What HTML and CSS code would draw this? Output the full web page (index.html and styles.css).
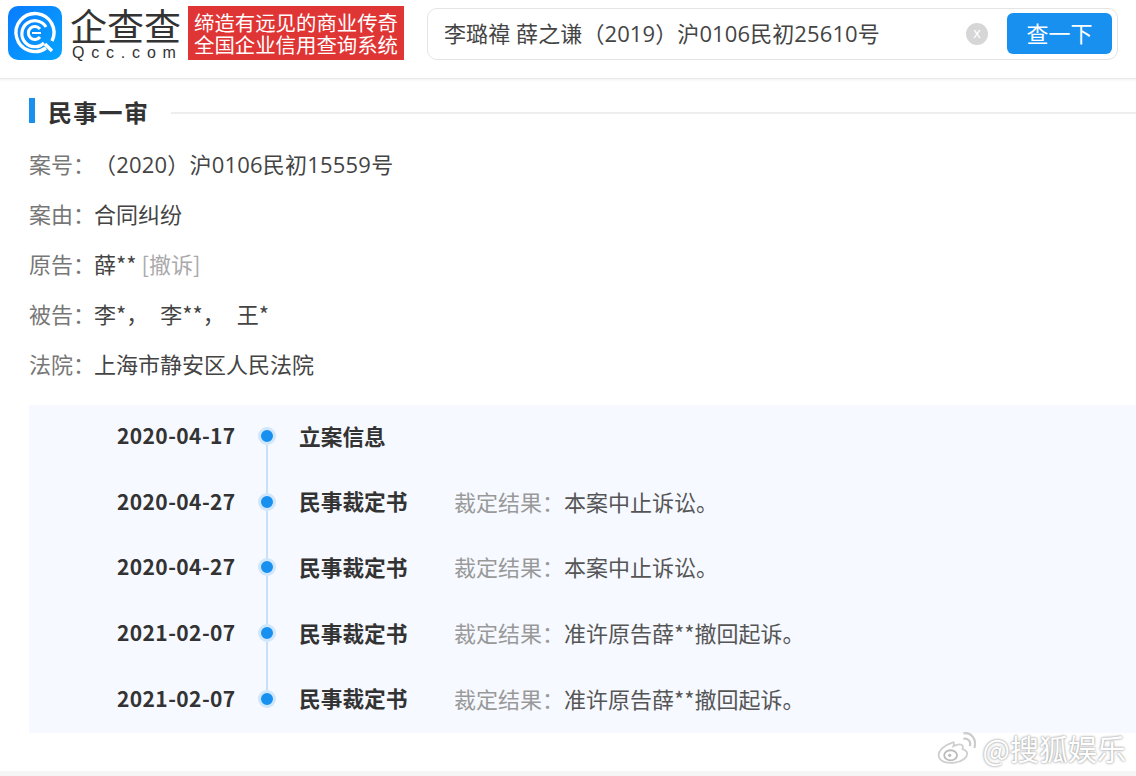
FILE: index.html
```html
<!DOCTYPE html>
<html lang="zh-CN">
<head>
<meta charset="utf-8">
<title>企查查</title>
<link rel="stylesheet" href="styles.css">
</head>
<body>
<header class="topbar">
  <div class="brand">
    <svg class="logo-icon" width="54" height="54" viewBox="0 0 54 54">
      <defs><linearGradient id="lg" x1="0" y1="0" x2="1" y2="1"><stop offset="0" stop-color="#0a7bff"/><stop offset="1" stop-color="#06a4ff"/></linearGradient></defs>
      <rect width="54" height="54" rx="10" fill="url(#lg)"/>
      <path d="M38 42 A19 19 0 1 1 44 35" fill="none" stroke="#fff" stroke-width="3.4"/>
      <path d="M36 37 A13 13 0 1 1 38 21" fill="none" stroke="#fff" stroke-width="3.2"/>
      <path d="M32 31 A6.5 6.5 0 1 1 32 23" fill="none" stroke="#fff" stroke-width="3"/>
      <path d="M24 27 H33" stroke="#fff" stroke-width="2"/>
      <path d="M37 38 L44 45" stroke="#fff" stroke-width="3.4"/>
    </svg>
    <div class="wordmark">
      <div class="wordmark-cn">企查查</div>
      <div class="wordmark-en">Qcc.com</div>
    </div>
    <div class="slogan">
      <div>缔造有远见的商业传奇</div>
      <div>全国企业信用查询系统</div>
    </div>
  </div>
  <div class="search">
    <span class="search-text">李璐禕 薛之谦（2019）沪0106民初25610号</span>
    <span class="search-clear">x</span>
    <span class="search-btn">查一下</span>
  </div>
</header>
<main class="content">
  <div class="section-head">
    <h2 class="section-title">民事一审</h2>
    <span class="section-rule"></span>
  </div>
  <dl class="facts">
    <div class="fact"><dt>案号：</dt><dd class="case-no">（2020）沪0106民初15559号</dd></div>
    <div class="fact"><dt>案由：</dt><dd>合同纠纷</dd></div>
    <div class="fact"><dt>原告：</dt><dd>薛** <span class="muted">[撤诉]</span></dd></div>
    <div class="fact"><dt>被告：</dt><dd class="people"><span>李*，</span><span>李**，</span><span>王*</span></dd></div>
    <div class="fact"><dt>法院：</dt><dd>上海市静安区人民法院</dd></div>
  </dl>
  <ol class="timeline">
    <li class="event"><time>2020-04-17</time><span class="dot"></span><strong>立案信息</strong></li>
    <li class="event"><time>2020-04-27</time><span class="dot"></span><strong>民事裁定书</strong><span class="result"><em>裁定结果：</em>本案中止诉讼。</span></li>
    <li class="event"><time>2020-04-27</time><span class="dot"></span><strong>民事裁定书</strong><span class="result"><em>裁定结果：</em>本案中止诉讼。</span></li>
    <li class="event"><time>2021-02-07</time><span class="dot"></span><strong>民事裁定书</strong><span class="result"><em>裁定结果：</em>准许原告薛**撤回起诉。</span></li>
    <li class="event"><time>2021-02-07</time><span class="dot"></span><strong>民事裁定书</strong><span class="result"><em>裁定结果：</em>准许原告薛**撤回起诉。</span></li>
  </ol>
</main>
<div class="watermark">
  <svg width="42" height="36" viewBox="0 0 46 38">
    <path d="M18 13 C8 16 2 23 3 28 C4 34 12 36 20 35 C29 34 35 29 34 24 C33 21 30 21 29 20 C30 17 29 15 26 15 C23 15 21 16 19 17 C20 14 20 12 18 13 Z" fill="#fff" stroke="#cfcfcf" stroke-width="2"/>
    <ellipse cx="16" cy="27" rx="7" ry="5.5" fill="none" stroke="#bbb" stroke-width="2"/>
    <circle cx="15" cy="27" r="1.8" fill="#bbb"/>
    <path d="M30 9 C35 8 39 12 37 17" fill="none" stroke="#ccc" stroke-width="2.4"/>
    <path d="M30 3 C38 1 45 9 42 19" fill="none" stroke="#ccc" stroke-width="2.4"/>
  </svg>
  <span>@搜狐娱乐</span>
</div>
```

FILE: styles.css
```css
* { box-sizing: border-box; }
html, body { margin: 0; padding: 0; }
body {
  width: 1136px;
  height: 776px;
  overflow: hidden;
  position: relative;
  background: #fff;
  color: #333;
  font-family: "Noto Sans CJK SC", sans-serif;
}
.topbar {
  height: 79px;
  display: flex;
  align-items: flex-start;
  justify-content: space-between;
  padding: 6px 18px 0 8px;
  border-bottom: 1px solid #e9e9e9;
  box-shadow: 0 1px 2px #f0f0f0;
}
.brand { display: flex; align-items: flex-start; }
.logo-icon { flex: none; }
.wordmark { width: 118px; margin-left: 8px; color: #333; }
.wordmark-cn {
  font-size: 37px;
  line-height: 39px;
  white-space: nowrap;
}
.wordmark-en {
  padding-left: 2px;
  font-size: 16px;
  line-height: 15px;
  letter-spacing: 6.8px;
  font-family: "Liberation Sans", sans-serif;
  white-space: nowrap;
}
.slogan {
  width: 216px;
  height: 54px;
  padding-top: 5px;
  background: #e03535;
  color: #fff;
  font-size: 20.4px;
  line-height: 22px;
  text-align: center;
  white-space: nowrap;
}
.search {
  width: 691px;
  height: 52px;
  margin-top: 2px;
  padding: 0 5px 0 16px;
  display: flex;
  align-items: center;
  border: 1px solid #e4e4e4;
  border-radius: 10px;
}
.search-text {
  flex: 1;
  font-family: "Open Sans", "Noto Sans CJK SC", sans-serif;
  font-size: 22px;
  line-height: 30px;
  letter-spacing: 0.1px;
  padding-bottom: 3px;
  color: #444;
  white-space: nowrap;
}
.search-clear {
  width: 22px;
  height: 22px;
  border-radius: 50%;
  background: #d6d6d6;
  color: #fff;
  font: 15px/20px "Liberation Sans", sans-serif;
  text-align: center;
  margin-right: 19px;
}
.search-btn {
  width: 105px;
  height: 41px;
  margin-bottom: 1px;
  border-radius: 6px;
  background: #1890f0;
  color: #fff;
  font-size: 22px;
  line-height: 39px;
  text-align: center;
}
.content { padding: 19px 0 0 29px; }
.section-head { display: flex; align-items: center; height: 25px; }
.section-title {
  margin: 0;
  padding-left: 13px;
  border-left: 6px solid #1890f0;
  height: 25px;
  font-size: 24px;
  line-height: 27px;
  font-weight: 700;
  letter-spacing: 1.3px;
  color: #333;
  white-space: nowrap;
}
.section-rule { flex: 1; height: 2px; margin: 5px 0 0 22px; background: #eee; }
.facts { margin: 15px 0 0; }
.fact {
  display: flex;
  height: 50px;
  align-items: center;
  font-size: 22px;
}
.fact dt { flex: none; width: 65px; color: #777; white-space: nowrap; }
.fact dd { margin: 0; color: #444; white-space: nowrap; }
.fact .case-no {
  font-family: "Open Sans", "Noto Sans CJK SC", sans-serif;
  letter-spacing: 0.2px;
}
.muted { color: #aaa; }
.people { display: flex; gap: 12px; }
.timeline {
  list-style: none;
  margin: 17px 0 0;
  padding: 0;
  height: 328px;
  background: #f6f9ff;
}
.event {
  position: relative;
  height: 65.6px;
  display: flex;
  align-items: center;
  padding: 0 0 5px 88px;
  font-size: 22px;
  white-space: nowrap;
}
.event time {
  width: 119px;
  font-weight: 700;
  font-size: 21px;
  letter-spacing: 0.4px;
  color: #333;
  flex: none;
}
.dot {
  position: relative;
  flex: none;
  width: 18px;
  height: 18px;
  margin: 2px 0 0 22px;
  border-radius: 50%;
  background: #1890f0;
  border: 3px solid #cfe6fb;
}
.event:not(:last-child) .dot::after {
  content: "";
  position: absolute;
  left: 5px;
  top: 15px;
  width: 2px;
  height: 49px;
  background: #c6e2fa;
}
.event strong {
  width: 155px;
  margin-left: 23px;
  font-size: 21.7px;
  font-weight: 700;
  color: #333;
  flex: none;
}
.event em { font-style: normal; color: #999; }
.result { color: #555; }
.watermark {
  position: absolute;
  right: 10px;
  bottom: 9px;
  display: flex;
  align-items: center;
  gap: 5px;
  color: #fff;
  font-size: 29px;
  line-height: 38px;
  text-shadow: 0 0 2px #999, 0 0 3px #bbb;
}
body::after {
  content: "";
  position: absolute;
  left: 0;
  right: 0;
  bottom: 0;
  height: 5px;
  background: #f5f5f5;
  z-index: -1;
}
```
